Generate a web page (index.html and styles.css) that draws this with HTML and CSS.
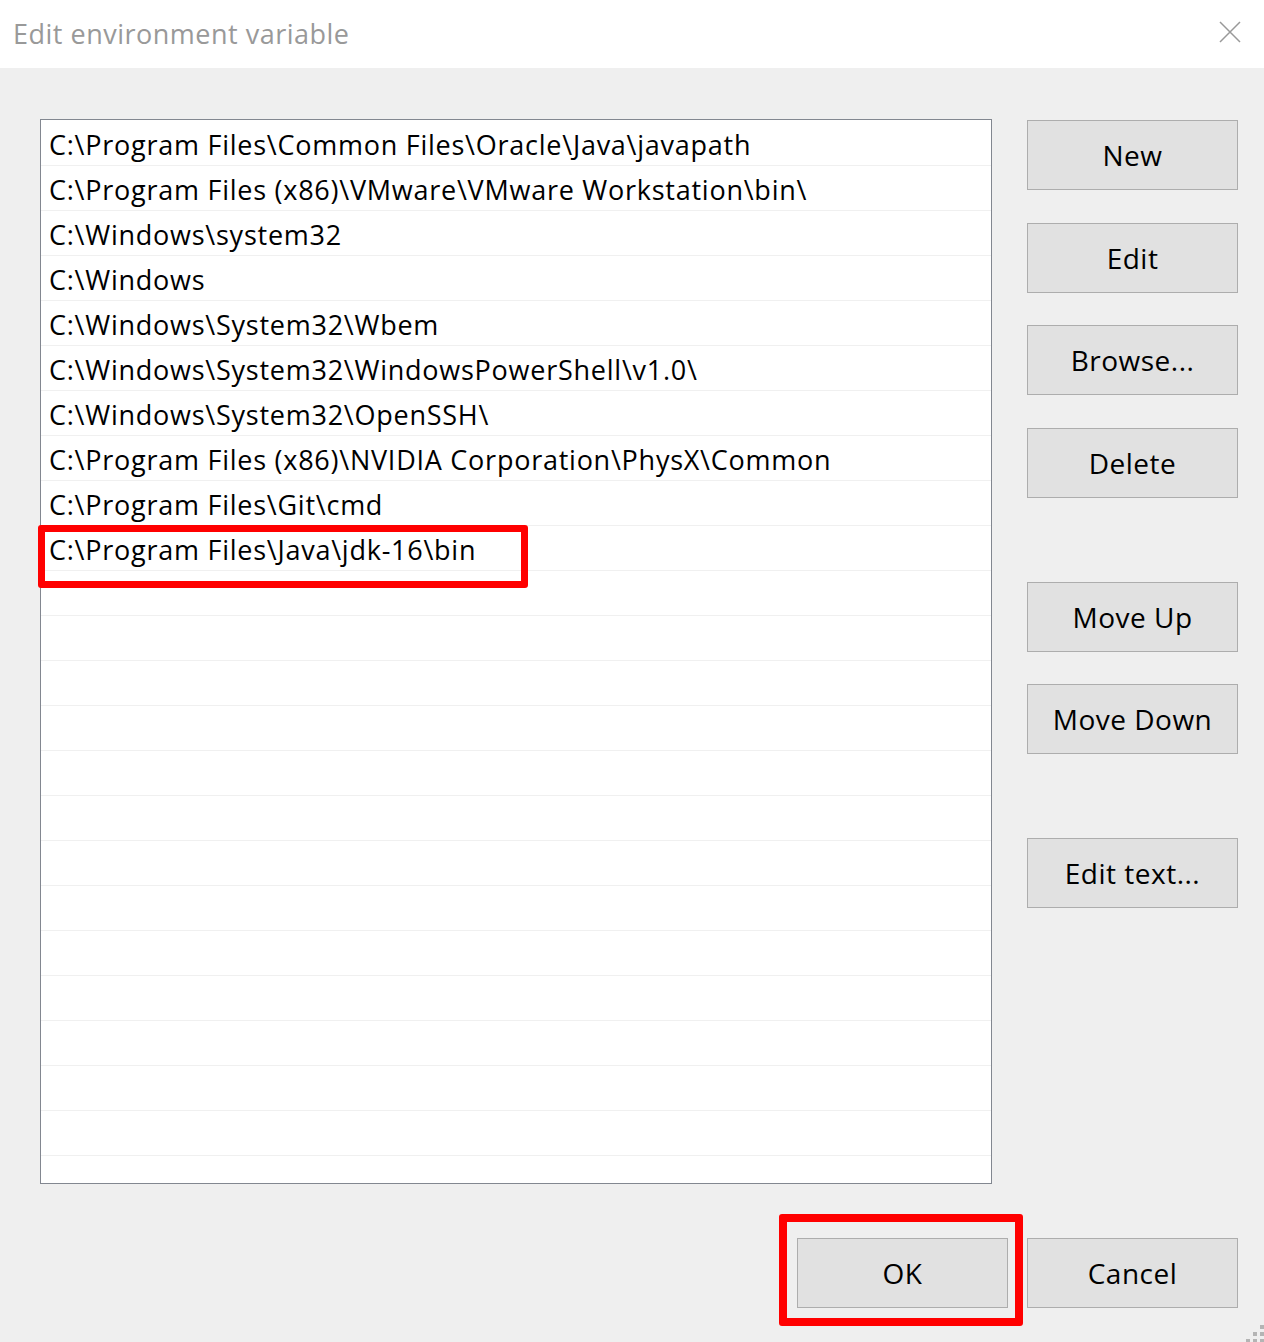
FILE: index.html
```html
<!DOCTYPE html>
<html lang="en">
<head>
    <meta charset="utf-8">
    <meta name="viewport" content="width=device-width, initial-scale=1">
    <title>Edit environment variable</title>
    <link rel="stylesheet" href="styles.css">
</head>
<body>
    <div class="titlebar">
        <span class="title">Edit environment variable</span>
        <span class="close">
            <svg width="22" height="22" viewBox="0 0 22 22">
                <path d="M1 1 L21 21 M21 1 L1 21" stroke="#999" stroke-width="1.5" fill="none"/>
            </svg>
        </span>
    </div>

    <div class="dialog">
        <div class="main">
            <div class="pathlist">
                <div class="row">C:\Program Files\Common Files\Oracle\Java\javapath</div>
                <div class="row">C:\Program Files (x86)\VMware\VMware Workstation\bin\</div>
                <div class="row">C:\Windows\system32</div>
                <div class="row">C:\Windows</div>
                <div class="row">C:\Windows\System32\Wbem</div>
                <div class="row">C:\Windows\System32\WindowsPowerShell\v1.0\</div>
                <div class="row">C:\Windows\System32\OpenSSH\</div>
                <div class="row">C:\Program Files (x86)\NVIDIA Corporation\PhysX\Common</div>
                <div class="row">C:\Program Files\Git\cmd</div>
                <div class="row">C:\Program Files\Java\jdk-16\bin</div>
                <div class="row"></div>
                <div class="row"></div>
                <div class="row"></div>
                <div class="row"></div>
                <div class="row"></div>
                <div class="row"></div>
                <div class="row"></div>
                <div class="row"></div>
                <div class="row"></div>
                <div class="row"></div>
                <div class="row"></div>
                <div class="row"></div>
                <div class="row"></div>
                <span class="mark row-mark"></span>
            </div>

            <div class="actions">
                <button class="btn">New</button>
                <button class="btn nudge">Edit</button>
                <button class="btn">Browse...</button>
                <button class="btn nudge">Delete</button>
                <button class="btn group">Move Up</button>
                <button class="btn">Move Down</button>
                <button class="btn group">Edit text...</button>
            </div>
        </div>

        <div class="footer">
            <div class="ok-wrap">
                <button class="btn">OK</button>
                <span class="mark ok-mark"></span>
            </div>
            <button class="btn">Cancel</button>
        </div>

        <svg class="grip" width="20" height="20" viewBox="0 0 20 20">
            <rect x="16" y="2" width="4" height="4" fill="#b4b4b4"/>
            <rect x="9" y="9" width="4" height="4" fill="#b4b4b4"/>
            <rect x="16" y="9" width="4" height="4" fill="#b4b4b4"/>
            <rect x="2" y="16" width="4" height="4" fill="#b4b4b4"/>
            <rect x="9" y="16" width="4" height="4" fill="#b4b4b4"/>
            <rect x="16" y="16" width="4" height="4" fill="#b4b4b4"/>
        </svg>
    </div>
</body>
</html>
```

FILE: styles.css
```css
body {
    margin: 0;
    font-family: "Open Sans", "Noto Sans", sans-serif;
    background-color: #efefef;
    color: #000;
}
.titlebar {
    height: 68px;
    background-color: #fff;
    display: flex;
    align-items: center;
    justify-content: space-between;
    padding: 0 23px 0 13px;
}
.title {
    font-size: 27px;
    letter-spacing: 0.5px;
    color: #999;
    margin-top: -2px;
}
.close {
    display: flex;
    margin-top: -4px;
}
.dialog {
    position: relative;
    height: 1274px;
    padding: 51px 26px 0 40px;
    box-sizing: border-box;
}
.main {
    display: flex;
    align-items: flex-start;
}
.pathlist {
    position: relative;
    width: 952px;
    height: 1065px;
    box-sizing: border-box;
    border: 1px solid #828790;
    background-color: #fff;
    padding-top: 1px;
}
.row {
    height: 40px;
    line-height: 40px;
    padding-top: 4px;
    border-bottom: 1px solid #f0f0f0;
    padding-left: 8px;
    font-size: 27px;
    letter-spacing: 0.75px;
    white-space: nowrap;
}
.actions {
    display: flex;
    flex-direction: column;
    gap: 32px;
    margin-left: 35px;
    padding-top: 1px;
}
.btn {
    width: 211px;
    height: 70px;
    background-color: #e1e1e1;
    border: 1px solid #adadad;
    font-family: "Open Sans", "Noto Sans", sans-serif;
    font-size: 28px;
    letter-spacing: 0.5px;
    color: #000;
    padding: 0;
    cursor: pointer;
}
.nudge {
    margin-top: 1px;
}
.group {
    margin-top: 52px;
}
.footer {
    display: flex;
    justify-content: flex-end;
    gap: 19px;
    margin-top: 54px;
}
.ok-wrap {
    position: relative;
    display: flex;
}
.mark {
    position: absolute;
    border: 7px solid #ff0000;
    border-radius: 3px;
    box-sizing: border-box;
}
.row-mark {
    left: -3px;
    top: 405px;
    width: 490px;
    height: 63px;
}
.ok-mark {
    border-width: 8px;
    left: -18px;
    top: -24px;
    right: -15px;
    bottom: -18px;
}
.grip {
    position: absolute;
    right: 0;
    bottom: -1px;
}
```
